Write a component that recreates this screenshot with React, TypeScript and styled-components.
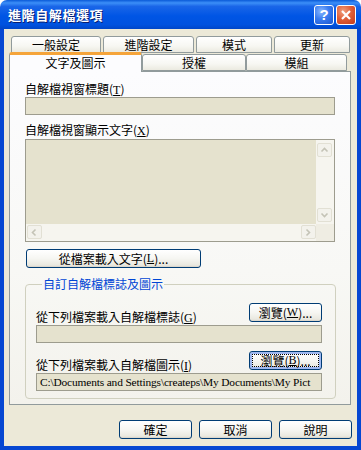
import styled, { createGlobalStyle } from "styled-components";
import { ReactElement } from "react";

const GlobalStyle = createGlobalStyle`
  html, body {
    margin: 0;
    padding: 0;
    background: #ffffff;
  }
  body {
    font-family: "Noto Sans CJK TC", "Liberation Sans", sans-serif;
    font-size: 12px;
  }
`

const Window = styled.div`
  width: 361px;
  height: 450px;
  display: flex;
  flex-direction: column;
  overflow: hidden;
`

const TitleBar = styled.div`
  height: 29px;
  flex-shrink: 0;
  display: flex;
  align-items: center;
  padding: 0 5px 0 8px;
  box-sizing: border-box;
  background: linear-gradient(180deg, #0a5ad8 0%, #3c8ff8 10%, #1a66e8 22%, #0055e5 55%, #0052df 85%, #0046c8 100%);
  border-radius: 7px 7px 0 0;
`

const Title = styled.span`
  flex: 1;
  color: #ffffff;
  font-weight: bold;
  font-size: 13px;
  letter-spacing: 0.6px;
  text-shadow: 1px 1px 0 #0a1e6e;
`

const CaptionButton = styled.div<{ $red?: boolean }>`
  width: 20px;
  height: 20px;
  margin-left: 2px;
  box-sizing: border-box;
  border: 1px solid #ffffff;
  border-radius: 3px;
  display: flex;
  align-items: center;
  justify-content: center;
  color: #ffffff;
  font-family: "Liberation Sans", sans-serif;
  font-weight: bold;
  font-size: 15px;
  background: ${p => p.$red
    ? "radial-gradient(circle at 35% 30%, #f0a080 0%, #e0603a 45%, #c43a18 100%)"
    : "radial-gradient(circle at 35% 30%, #8ab8ff 0%, #3a7cf0 45%, #1a55d0 100%)"};
`

const Body = styled.div`
  flex: 1;
  background: #ece9d8;
  border: 4px solid #0647d2;
  border-top: none;
  padding: 7px 0 0 5px;
  display: flex;
  flex-direction: column;
`

const TabRow = styled.div<{ $front?: boolean }>`
  display: flex;
  align-items: flex-end;
  height: ${p => (p.$front ? "18px" : "17px")};
  padding-left: ${p => (p.$front ? "0" : "2px")};
  gap: ${p => (p.$front ? "0" : "2px")};
`

const Tab = styled.div<{ $w: number; $active?: boolean }>`
  width: ${p => p.$w}px;
  height: ${p => (p.$active ? "20px" : "17px")};
  box-sizing: border-box;
  border: 1px solid #919b9c;
  border-bottom: ${p => (p.$active ? "none" : "1px solid #919b9c")};
  border-top: ${p => (p.$active ? "3px solid #f5a43a" : "1px solid #919b9c")};
  border-radius: 3px 3px 0 0;
  background: ${p => (p.$active ? "#fcfcfe" : "linear-gradient(180deg, #ffffff 0%, #f7f7f2 60%, #ebeae0 100%)")};
  margin-bottom: ${p => (p.$active ? "-1px" : "0")};
  position: relative;
  z-index: ${p => (p.$active ? 2 : 1)};
  display: flex;
  align-items: center;
  justify-content: center;
  font-size: 12px;
  line-height: 14px;
  color: #000000;
  padding-top: ${p => (p.$active ? "0" : "1px")};
  padding-bottom: ${p => (p.$active ? "2px" : "0")};
`

const Panel = styled.div`
  width: 342px;
  height: 334px;
  box-sizing: border-box;
  border: 1px solid #919b9c;
  background: linear-gradient(180deg, #fcfcfe 0%, #f8f8f5 60%, #f3f2ec 100%);
  padding: 10px 14px 0 15px;
  display: flex;
  flex-direction: column;
  position: relative;
  z-index: 1;
`

const Label = styled.div<{ $gap?: number }>`
  font-size: 12px;
  line-height: 14px;
  height: 14px;
  margin-top: ${p => p.$gap ?? 0}px;
  color: #000000;
  white-space: nowrap;
`

const Key = styled.u`
  font-family: "Liberation Serif", serif;
`

const TextBox = styled.div<{ $w?: number; $gap?: number }>`
  width: ${p => p.$w ?? 310}px;
  height: 18px;
  box-sizing: border-box;
  margin-top: ${p => p.$gap ?? 1}px;
  border: 1px solid #9d9c8e;
  background: #e5e2ce;
  font-family: "Liberation Serif", serif;
  font-size: 11.4px;
  letter-spacing: -0.15px;
  line-height: 16px;
  padding-left: 3px;
  white-space: nowrap;
  overflow: hidden;
  color: #000000;
`

const TextArea = styled.div`
  width: 310px;
  height: 103px;
  margin-top: 2px;
  box-sizing: border-box;
  border: 1px solid #9d9c8e;
  display: grid;
  grid-template-columns: 1fr 18px;
  grid-template-rows: 1fr 17px;
`

const TextContent = styled.div`
  background: #e5e2ce;
`

const ScrollV = styled.div`
  background: #f6f5ef;
  display: flex;
  flex-direction: column;
  justify-content: space-between;
  padding: 3px 1px 2px 1px;
`

const ScrollH = styled.div`
  background: #f6f5ef;
  display: flex;
  justify-content: space-between;
  padding: 1px 0 1px 1px;
`

const Corner = styled.div`
  background: #efede3;
`

const ArrowBox = styled.div`
  width: 15px;
  height: 14px;
  box-sizing: border-box;
  border: 1px solid #e2e0d4;
  border-radius: 2px;
  background: #f3f2ec;
  display: flex;
  align-items: center;
  justify-content: center;
`

const PushButton = styled.button<{ $w: number; $focus?: boolean }>`
  width: ${p => p.$w}px;
  height: 19px;
  box-sizing: border-box;
  padding: 0;
  border: 1px solid #003c74;
  border-radius: 3px;
  background: linear-gradient(180deg, #ffffff 0%, #f6f6f2 50%, #e9e8df 90%, #d6d0c5 100%);
  box-shadow: ${p => (p.$focus ? "inset 0 0 0 2px #9fb8f0" : "none")};
  font-family: "Noto Sans CJK TC", "Liberation Sans", sans-serif;
  font-size: 12px;
  line-height: 15px;
  color: #000000;
  display: flex;
  align-items: center;
  justify-content: center;
  outline: ${p => (p.$focus ? "1px dotted #000000" : "none")};
  outline-offset: -4px;
  flex-shrink: 0;
`

const WideButton = styled(PushButton)`
  margin-top: 7px;
  margin-left: 1px;
`

const Group = styled.fieldset`
  width: 310px;
  height: 122px;
  box-sizing: border-box;
  margin: 9px 0 0 0;
  padding: 6px 13px 0 10px;
  border: 1px solid #d0d0bf;
  border-radius: 4px;
  display: flex;
  flex-direction: column;
`

const Legend = styled.legend`
  color: #0046d5;
  font-size: 12px;
  line-height: 14px;
  padding: 0 1px;
  margin-left: 6px;
`

const PickRow = styled.div<{ $gap?: number }>`
  display: flex;
  justify-content: space-between;
  align-items: flex-end;
  height: 18px;
  margin-top: ${p => p.$gap ?? 0}px;
`

const PickLabel = styled.span`
  font-size: 12px;
  line-height: 14px;
  margin-bottom: -3px;
  white-space: nowrap;
`

const Footer = styled.div`
  display: flex;
  justify-content: flex-end;
  gap: 7px;
  padding: 15px 5px 0 0;
`

const Chevron = ({ dir }: { dir: "up" | "down" | "left" | "right" }): ReactElement => {
  const d = {
    up: "M1.5 5.5 L4.5 2.5 L7.5 5.5",
    down: "M1.5 2.5 L4.5 5.5 L7.5 2.5",
    left: "M5.5 1.5 L2.5 4.5 L5.5 7.5",
    right: "M2.5 1.5 L5.5 4.5 L2.5 7.5",
  }[dir];
  return (
    <svg width="9" height="9" viewBox="0 0 9 9">
      <path d={d} fill="none" stroke="#c4c3b6" strokeWidth="1.6" />
    </svg>
  );
};

export const App = (): ReactElement => {
  return (
    <Window>
      <GlobalStyle />
      <TitleBar>
        <Title>進階自解檔選項</Title>
        <CaptionButton>?</CaptionButton>
        <CaptionButton $red>
          <svg width="12" height="12" viewBox="0 0 12 12">
            <path d="M2 2 L10 10 M10 2 L2 10" stroke="#ffffff" strokeWidth="2.2" />
          </svg>
        </CaptionButton>
      </TitleBar>

      <Body>
        <TabRow>
          <Tab $w={90}>一般設定</Tab>
          <Tab $w={91}>進階設定</Tab>
          <Tab $w={76}>模式</Tab>
          <Tab $w={76}>更新</Tab>
        </TabRow>
        <TabRow $front>
          <Tab $w={133} $active>文字及圖示</Tab>
          <Tab $w={104}>授權</Tab>
          <Tab $w={101}>模組</Tab>
        </TabRow>

        <Panel>
          <Label>自解檔視窗標題(<Key>T</Key>)</Label>
          <TextBox />
          <Label $gap={8}>自解檔視窗顯示文字(<Key>X</Key>)</Label>
          <TextArea>
            <TextContent />
            <ScrollV>
              <ArrowBox><Chevron dir="up" /></ArrowBox>
              <ArrowBox><Chevron dir="down" /></ArrowBox>
            </ScrollV>
            <ScrollH>
              <ArrowBox><Chevron dir="left" /></ArrowBox>
              <ArrowBox><Chevron dir="right" /></ArrowBox>
            </ScrollH>
            <Corner />
          </TextArea>
          <WideButton $w={175}>從檔案載入文字(<Key>L</Key>)...</WideButton>

          <Group>
            <Legend>自訂自解檔標誌及圖示</Legend>
            <PickRow $gap={7}>
              <PickLabel>從下列檔案載入自解檔標誌(<Key>G</Key>)</PickLabel>
              <PushButton $w={73}>瀏覽(<Key>W</Key>)...</PushButton>
            </PickRow>
            <TextBox $w={286} $gap={3} />
            <PickRow $gap={9}>
              <PickLabel>從下列檔案載入自解檔圖示(<Key>I</Key>)</PickLabel>
              <PushButton $w={73} $focus>瀏覽(<Key>B</Key>)...</PushButton>
            </PickRow>
            <TextBox $w={286} $gap={3}>C:\Documents and Settings\createps\My Documents\My Pict</TextBox>
          </Group>
        </Panel>

        <Footer>
          <PushButton $w={73}>確定</PushButton>
          <PushButton $w={73}>取消</PushButton>
          <PushButton $w={73}>說明</PushButton>
        </Footer>
      </Body>
    </Window>
  );
};

export default App
